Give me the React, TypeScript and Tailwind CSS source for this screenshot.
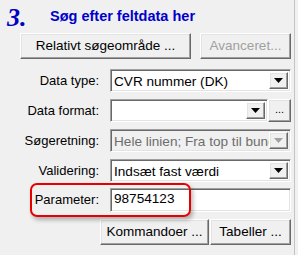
import React from "react";

const raised =
  "border border-t-white border-l-white border-b-[#696969] border-r-[#696969] shadow-[inset_-1px_-1px_0_#a0a0a0,inset_1px_1px_0_#e3e3e3] bg-[#f0f0f0]";
const sunken =
  "border border-t-[#a0a0a0] border-l-[#a0a0a0] border-b-white border-r-white shadow-[inset_1px_1px_0_#696969,inset_-1px_-1px_0_#e3e3e3]";

function Arrow({ disabled }: { disabled?: boolean }) {
  return (
    <div className={`${raised} w-[19px] h-full flex items-center justify-center shrink-0`}>
      <svg width="9" height="5" viewBox="0 0 9 5">
        <polygon points="0,0 9,0 4.5,5" fill={disabled ? "#a0a0a0" : "#000"} />
      </svg>
    </div>
  );
}

function Combo({ text, width, disabled }: { text: string; width: number; disabled?: boolean }) {
  return (
    <div
      className={`${sunken} h-[23px] flex items-stretch p-[2px] ${disabled ? "bg-[#f0f0f0]" : "bg-white"}`}
      style={{ width }}
    >
      <div
        className={`flex-1 overflow-hidden whitespace-nowrap pl-[1px] text-[13.6px] leading-[19px] ${disabled ? "text-[#6d6d6d]" : "text-black"}`}
      >
        {text}
      </div>
      <Arrow disabled={disabled} />
    </div>
  );
}

function Row({ label, children, top }: { label: string; children: React.ReactNode; top: string }) {
  return (
    <div className={`flex items-center ${top}`}>
      <div className="w-[100px] text-right pr-[1px] whitespace-nowrap">{label}</div>
      <div className="ml-[10px] flex">{children}</div>
    </div>
  );
}

export default function App() {
  return (
    <div className="w-[298px] h-[255px] bg-[#f0f0f0] overflow-hidden font-['Liberation_Sans',Arial,sans-serif] text-[13px] text-black">
      <div className="relative w-[295px] h-[255px] border-r border-[#c4c4c4]">
        <div className="flex items-start pt-[5px] h-[33px]">
          <div className="ml-[7px] w-[43px] font-['Liberation_Serif',serif] font-bold italic text-[26px] leading-[26px] text-[#0000c0]">
            3.
          </div>
          <div className="mt-[3px] font-bold text-[14.5px] leading-[17px] text-[#0000cc] whitespace-nowrap">
            Søg efter feltdata her
          </div>
        </div>
        <div className="flex pl-[20px] gap-[9px]">
          <button className={`${raised} w-[171px] h-[26px] text-[13.5px]`}>Relativt søgeområde ...</button>
          <button className={`${raised} w-[91px] h-[26px] text-[13.5px] text-[#a0a0a0]`}>Avanceret...</button>
        </div>
        <Row label="Data type:" top="mt-[10px]">
          <Combo text="CVR nummer (DK)" width={181} />
        </Row>
        <Row label="Data format:" top="mt-[7px]">
          <Combo text="" width={158} />
          <button className={`${raised} w-[23px] h-[23px] text-[11px] leading-none pb-[2px]`}>...</button>
        </Row>
        <Row label="Søgeretning:" top="mt-[7px]">
          <Combo text="Hele linien; Fra top til bund" width={181} disabled />
        </Row>
        <Row label="Validering:" top="mt-[7px]">
          <Combo text="Indsæt fast værdi" width={181} />
        </Row>
        <Row label="Parameter:" top="mt-[6px]">
          <div className={`${sunken} bg-white w-[181px] h-[24px] pl-[3px] text-[13.6px] leading-[20px]`}>98754123</div>
        </Row>
        <div className="flex pl-[100px] gap-[1px] mt-[7px]">
          <button className={`${raised} w-[109px] h-[26px] text-[13.5px]`}>Kommandoer ...</button>
          <button className={`${raised} w-[81px] h-[26px] text-[13.5px]`}>Tabeller ...</button>
        </div>
        <div className="absolute left-[30px] top-[183px] w-[161px] h-[34px] border-2 border-[#e80000] rounded-[7px] shadow-[2px_3px_4px_rgba(0,0,0,0.28)] pointer-events-none" />
      </div>
    </div>
  );
}
